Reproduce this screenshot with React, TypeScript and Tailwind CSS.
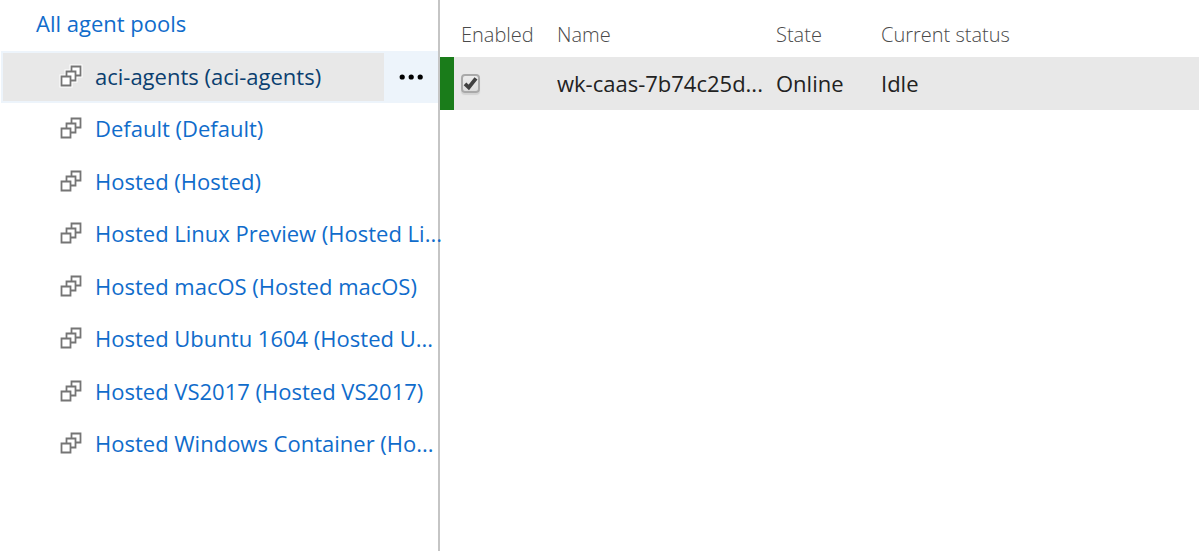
const pools = [
  "aci-agents (aci-agents)",
  "Default (Default)",
  "Hosted (Hosted)",
  "Hosted Linux Preview (Hosted Li...",
  "Hosted macOS (Hosted macOS)",
  "Hosted Ubuntu 1604 (Hosted U...",
  "Hosted VS2017 (Hosted VS2017)",
  "Hosted Windows Container (Ho...",
];

function PoolIcon({ selected }: { selected: boolean }) {
  const outline = "M1.5 11.5h9v9h-9zM6.5 11.5v-5h9v9h-5M11.5 6.5v-5h9v9h-5";
  return (
    <svg viewBox="0 0 24 24" className="size-6 shrink-0 overflow-visible" fill="none" aria-hidden="true">
      {selected && <path d={outline} stroke="#fff" strokeWidth="4" />}
      <path d="M1.5 11.5h9v9h-9zM6.5 6.5h9v9h-9zM11.5 1.5h9v9h-9z" fill="#fff" />
      <path d={outline} stroke="#757575" strokeWidth="1.8" />
    </svg>
  );
}

function PoolRow({ name, selected }: { name: string; selected: boolean }) {
  return (
    <li className="flex min-w-0 pb-px">
      <div
        className={`flex min-w-0 flex-1 border-2 ${selected ? "border-[#edf4fb] border-r-0 bg-[#e8e8e8]" : "border-transparent border-r-0"}`}
      >
        <a
          href="#pool"
          className={`flex min-w-0 flex-1 items-center gap-[11px] pl-[57px] ${selected ? "text-[#0b3f70]" : "text-[#106ccb]"}`}
        >
          <PoolIcon selected={selected} />
          <span className="pb-0.5 whitespace-nowrap">{name}</span>
        </a>
      </div>
      {selected && (
        <button
          type="button"
          aria-label="More actions"
          className="flex w-[54px] shrink-0 items-center justify-center bg-[#edf4fb]"
        >
          <svg viewBox="0 0 24 6" className="h-1.5 w-6" aria-hidden="true">
            <circle cx="3.2" cy="3" r="2.6" />
            <circle cx="12.2" cy="3" r="2.6" />
            <circle cx="21.2" cy="3" r="2.6" />
          </svg>
        </button>
      )}
    </li>
  );
}

export default function App() {
  return (
    <div className="flex bg-white font-['Open_Sans','Noto_Sans',sans-serif] text-[22px] leading-7">
      <nav aria-label="Agent pools" className="min-h-[551px] w-[440px] shrink-0 border-r-2 border-[#c5c5c5]">
        <div className="flex h-[51px] items-start pt-[9px] pl-9">
          <a href="#all" className="text-[#106ccb]">
            All agent pools
          </a>
        </div>
        <ul className="grid h-[420px] auto-rows-fr grid-cols-1 pl-px">
          {pools.map((name, index) => (
            <PoolRow key={name} name={name} selected={index === 0} />
          ))}
        </ul>
      </nav>
      <main className="min-w-0 flex-1">
        <table className="w-full table-fixed border-collapse text-left">
          <colgroup>
            <col className="w-[117px]" />
            <col className="w-[219px]" />
            <col className="w-[105px]" />
            <col />
          </colgroup>
          <thead>
            <tr className="h-[57px] text-xl text-[#4a4a4a]">
              <th className="pt-3 pl-[21px] font-light">Enabled</th>
              <th className="pt-3 font-light">Name</th>
              <th className="pt-3 font-light">State</th>
              <th className="pt-3 font-light">Current status</th>
            </tr>
          </thead>
          <tbody>
            <tr className="h-[53px] bg-[#e8e8e8] text-[#222]">
              <td className="p-0">
                <div className="flex h-[53px] items-center gap-[7px]">
                  <span className="h-full w-3.5 bg-[#1a7c1a]" />
                  <label className="relative size-[19px]">
                    <input
                      type="checkbox"
                      defaultChecked
                      aria-label="Enabled"
                      className="peer block size-[19px] appearance-none rounded-[4px] border-2 border-[#a9a9a9] bg-linear-to-b from-[#ececec] to-[#dcdcdc] shadow-[0_2px_1px_#d2d2d2]"
                    />
                    <svg
                      viewBox="0 0 19 19"
                      className="pointer-events-none invisible absolute top-0 left-0 size-[19px] peer-checked:visible"
                      fill="none"
                      aria-hidden="true"
                    >
                      <path d="M4 9.8L7.8 13.4L15 4.4" stroke="#404040" strokeWidth="3.8" />
                    </svg>
                  </label>
                </div>
              </td>
              <td className="p-0 pb-0.5">
                <div className="truncate">wk-caas-7b74c25d...</div>
              </td>
              <td className="p-0 pb-0.5">Online</td>
              <td className="p-0 pb-0.5">Idle</td>
            </tr>
          </tbody>
        </table>
      </main>
    </div>
  );
}
